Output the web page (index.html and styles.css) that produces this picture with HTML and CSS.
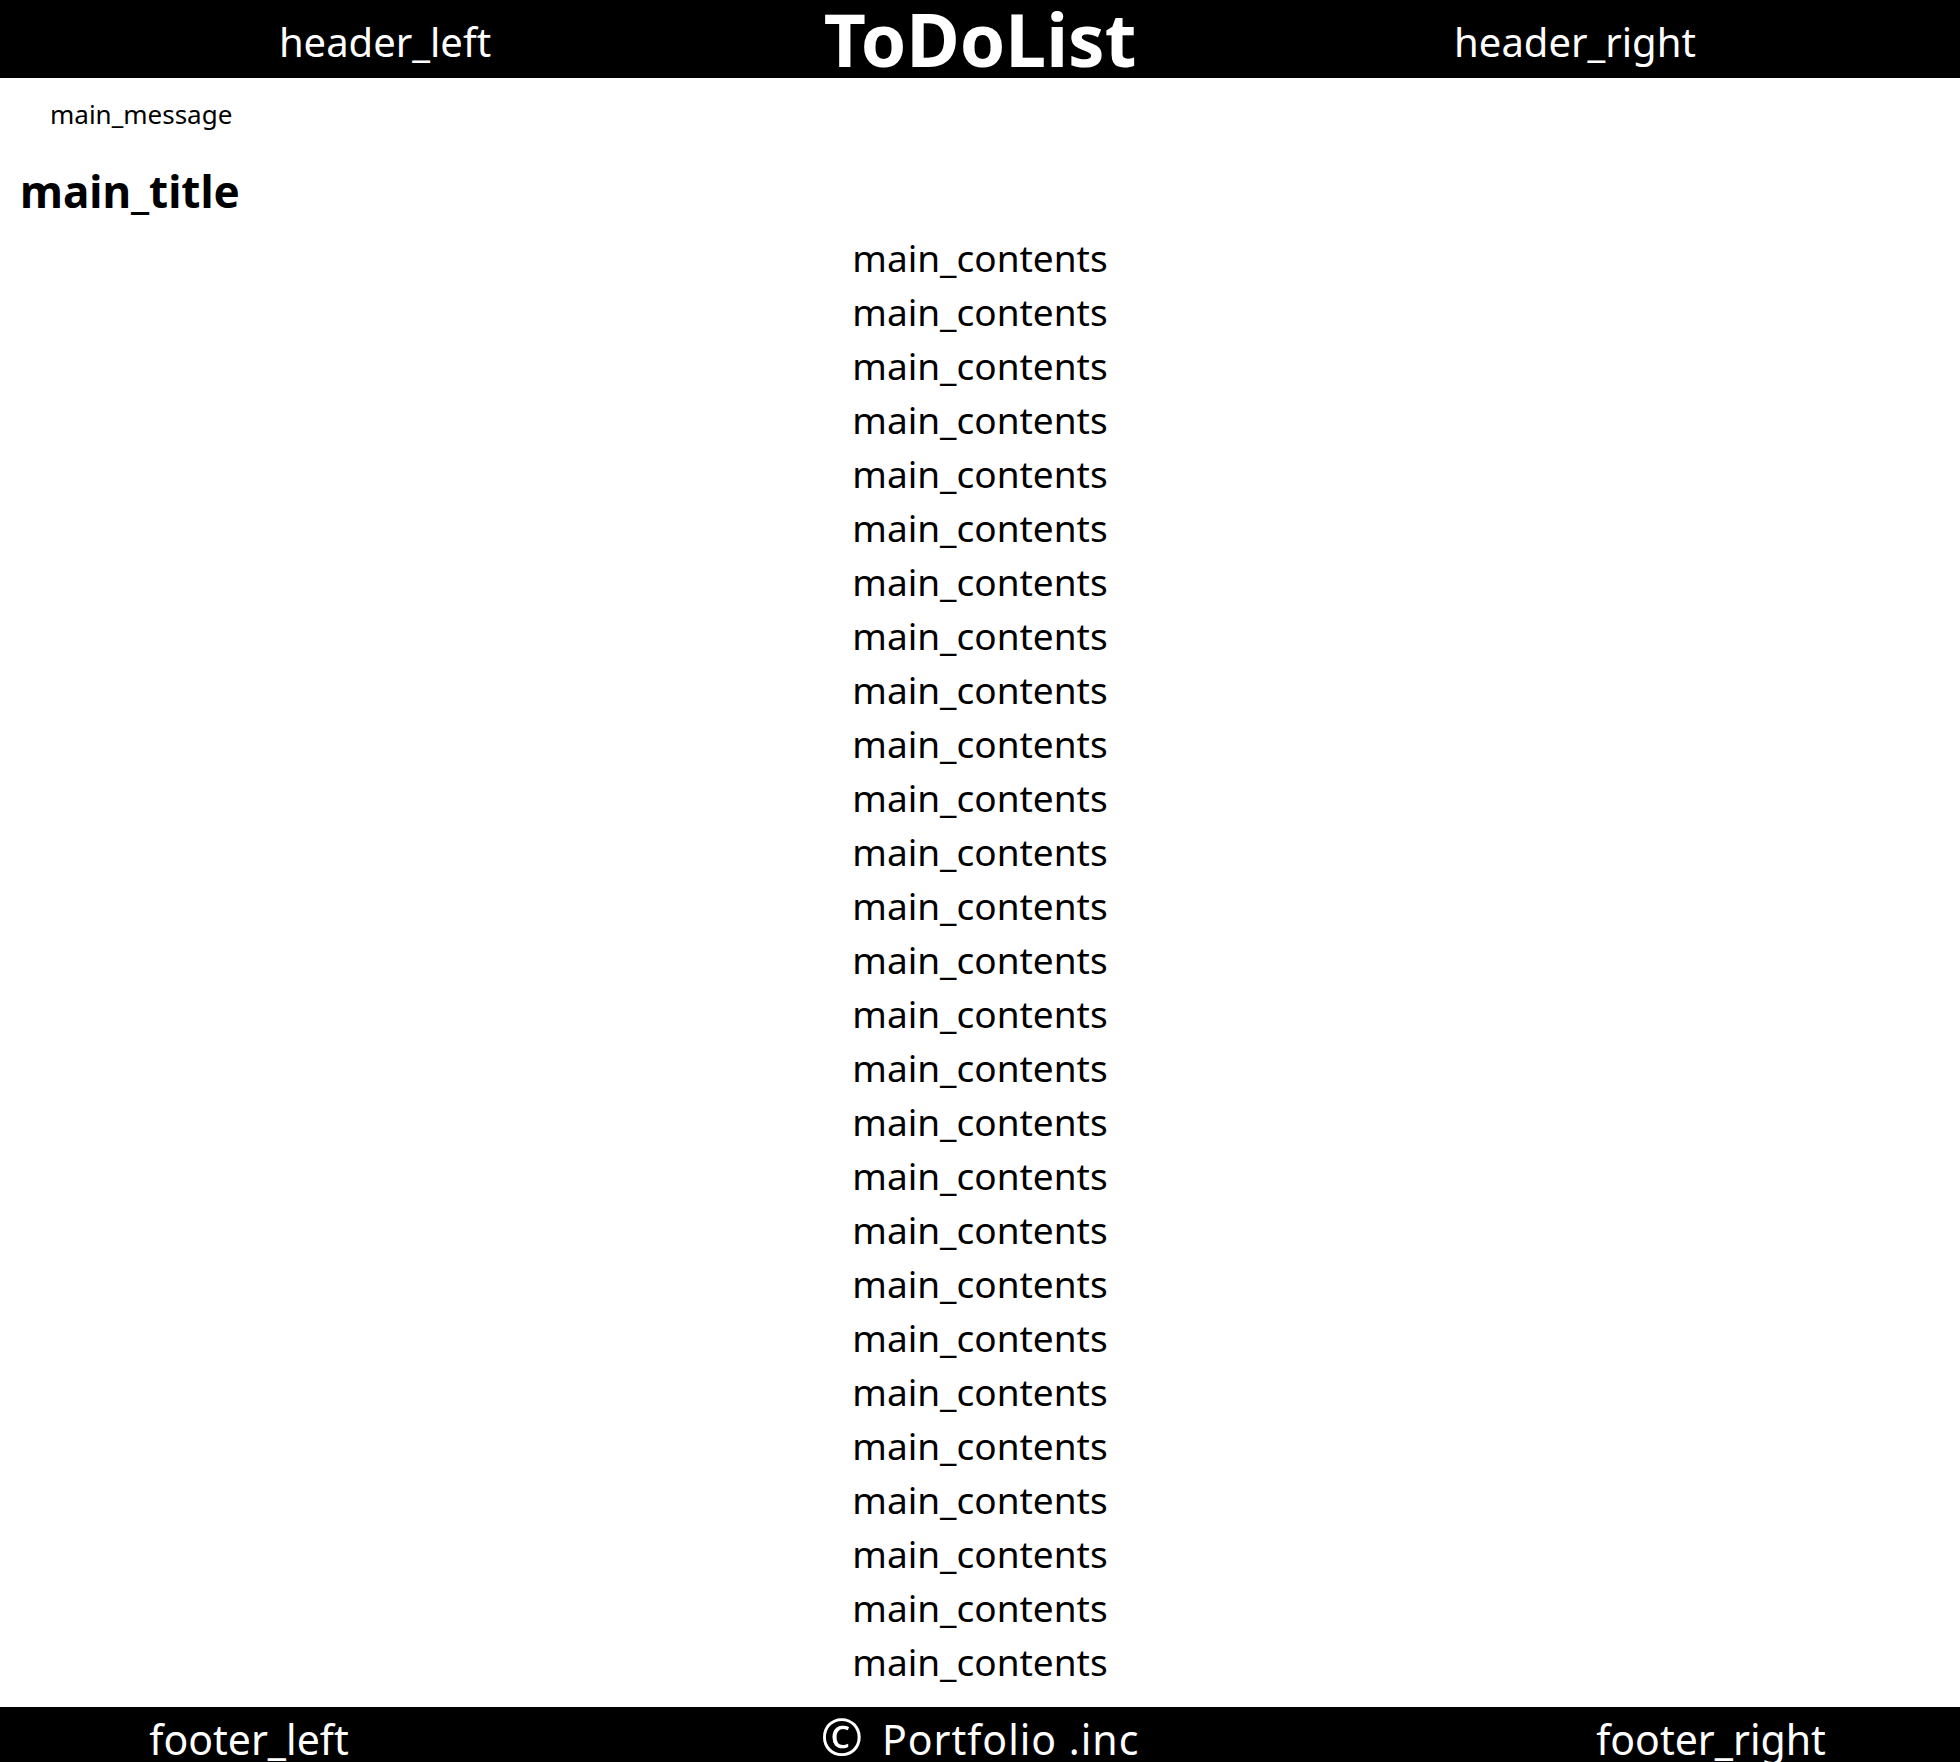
FILE: index.html
```html
<!DOCTYPE html>
<html lang="ja">
<head>
<meta charset="utf-8">
<title>ToDoList</title>
<link rel="stylesheet" href="styles.css">
</head>
<body>
<header class="site-header">
  <div class="header-item">header_left</div>
  <h1 class="site-title">ToDoList</h1>
  <div class="header-item">header_right</div>
</header>
<main class="main">
  <p class="main-message">main_message</p>
  <h2 class="main-title">main_title</h2>
  <ul class="contents">
    <li>main_contents</li>
    <li>main_contents</li>
    <li>main_contents</li>
    <li>main_contents</li>
    <li>main_contents</li>
    <li>main_contents</li>
    <li>main_contents</li>
    <li>main_contents</li>
    <li>main_contents</li>
    <li>main_contents</li>
    <li>main_contents</li>
    <li>main_contents</li>
    <li>main_contents</li>
    <li>main_contents</li>
    <li>main_contents</li>
    <li>main_contents</li>
    <li>main_contents</li>
    <li>main_contents</li>
    <li>main_contents</li>
    <li>main_contents</li>
    <li>main_contents</li>
    <li>main_contents</li>
    <li>main_contents</li>
    <li>main_contents</li>
    <li>main_contents</li>
    <li>main_contents</li>
    <li>main_contents</li>
  </ul>
</main>
<footer class="site-footer">
  <div class="footer-item">footer_left</div>
  <div class="footer-item footer-copy"><span class="copy">©</span> Portfolio .inc</div>
  <div class="footer-item">footer_right</div>
</footer>
</body>
</html>
```
FILE: styles.css
```css
html, body {
  margin: 0;
  padding: 0;
  background: #fff;
  color: #000;
  font-family: "Noto Sans", "Noto Sans CJK JP", sans-serif;
}

.site-header {
  background: #000;
  color: #fff;
  height: 78px;
  display: grid;
  grid-template-columns: repeat(3, 595px);
  justify-content: center;
  align-items: start;
}

.header-item {
  text-align: center;
  font-size: 40px;
  padding-top: 5px;
  line-height: 73px;
}

.site-title {
  margin: 0;
  text-align: center;
  font-size: 73px;
  font-weight: 700;
  line-height: 78px;
}

.main-message {
  margin: 0;
  padding: 18px 0 0 50px;
  font-size: 26px;
  line-height: 36px;
}

.main-title {
  margin: 0;
  padding: 29px 0 0 20px;
  font-size: 44px;
  font-weight: 700;
  line-height: 60px;
}

.contents {
  list-style: none;
  margin: 10px 0 0;
  padding: 0 0 18px;
  text-align: center;
  font-size: 37px;
  line-height: 54px;
}

.site-footer {
  background: #000;
  color: #fff;
  display: grid;
  grid-template-columns: repeat(3, 498px);
  justify-content: space-between;
  align-items: start;
  font-size: 41px;
  line-height: 64px;
}

.footer-item {
  text-align: center;
}

.footer-copy {
  letter-spacing: 1px;
}

.copy {
  font-size: 1.25em;
  line-height: 1;
  margin-right: 6px;
}
```
